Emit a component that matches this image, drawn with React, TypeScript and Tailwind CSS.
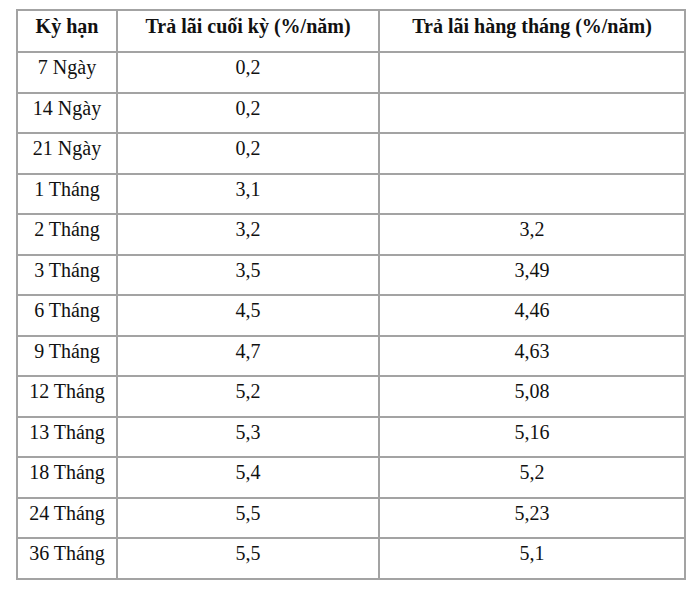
const rows: [string, string, string][] = [
  ["7 Ngày", "0,2", ""],
  ["14 Ngày", "0,2", ""],
  ["21 Ngày", "0,2", ""],
  ["1 Tháng", "3,1", ""],
  ["2 Tháng", "3,2", "3,2"],
  ["3 Tháng", "3,5", "3,49"],
  ["6 Tháng", "4,5", "4,46"],
  ["9 Tháng", "4,7", "4,63"],
  ["12 Tháng", "5,2", "5,08"],
  ["13 Tháng", "5,3", "5,16"],
  ["18 Tháng", "5,4", "5,2"],
  ["24 Tháng", "5,5", "5,23"],
  ["36 Tháng", "5,5", "5,1"],
];

const cell = "border-2 border-[#a3a3a3] text-center align-top p-0 leading-[28px]";

export default function App() {
  return (
    <div className="w-[700px] h-[594px] bg-white pt-[9px] pl-[16px] font-[family-name:'Liberation_Serif',serif] text-[#111] text-[20px]">
      <table className="border-collapse table-fixed w-[668px]">
        <colgroup>
          <col className="w-[100px]" />
          <col className="w-[262px]" />
          <col className="w-[306px]" />
        </colgroup>
        <thead>
          <tr className="h-[42px]">
            <th className={`${cell} font-bold pt-[1px]`}>Kỳ hạn</th>
            <th className={`${cell} font-bold pt-[1px]`}>Trả lãi cuối kỳ (%/năm)</th>
            <th className={`${cell} font-bold pt-[1px]`}>Trả lãi hàng tháng (%/năm)</th>
          </tr>
        </thead>
        <tbody>
          {rows.map(([term, end, monthly]) => (
            <tr key={term} className="h-[40.5px]">
              <td className={cell}>{term}</td>
              <td className={cell}>{end}</td>
              <td className={cell}>{monthly}</td>
            </tr>
          ))}
        </tbody>
      </table>
    </div>
  );
}
